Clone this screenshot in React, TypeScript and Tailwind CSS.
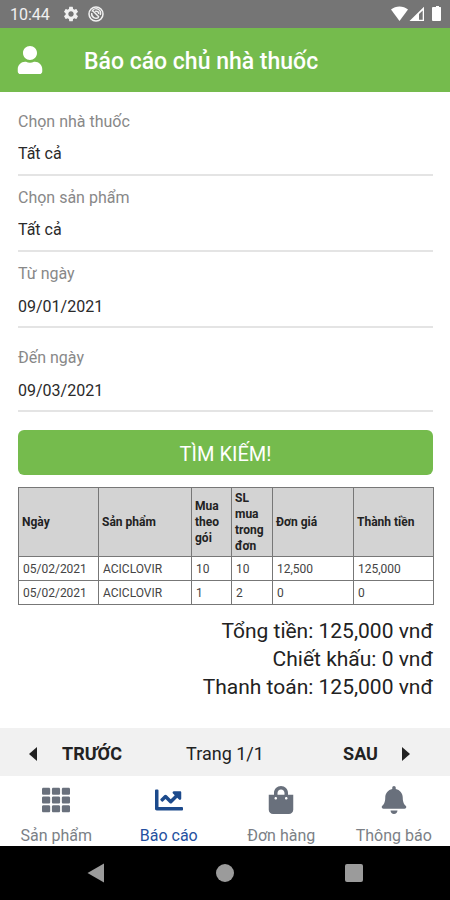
import { FC, ReactNode, useState } from "react";
import { FaBell, FaChartLine, FaShoppingBag, FaTh, FaUser } from "react-icons/fa";
import { MdSettings } from "react-icons/md";
import clsx from "clsx";

type ReportRow = {
  date: string;
  product: string;
  packs: number;
  quantity: number;
  price: string;
  total: string;
};

const ROWS: ReportRow[] = [
  { date: "05/02/2021", product: "ACICLOVIR", packs: 10, quantity: 10, price: "12,500", total: "125,000" },
  { date: "05/02/2021", product: "ACICLOVIR", packs: 1, quantity: 2, price: "0", total: "0" },
];

// fixed table layout stretches these to the full width
const COLUMNS = [
  { title: "Ngày", width: "w-[80px]" },
  { title: "Sản phẩm", width: "w-[93px]" },
  { title: "Mua theo gói", width: "w-[40px]" },
  { title: "SL mua trong đơn", width: "w-[41px]" },
  { title: "Đơn giá", width: "w-[81px]" },
  { title: "Thành tiền", width: "w-[80px]" },
];

const TOTALS = ["Tổng tiền: 125,000 vnđ", "Chiết khấu: 0 vnđ", "Thanh toán: 125,000 vnđ"];

const TABS = [
  { label: "Sản phẩm", href: "#products", icon: FaTh },
  { label: "Báo cáo", href: "#reports", icon: FaChartLine, active: true },
  { label: "Đơn hàng", href: "#orders", icon: FaShoppingBag },
  { label: "Thông báo", href: "#notifications", icon: FaBell },
];

const CONTROL = "block h-10 w-full appearance-none bg-transparent p-0 text-base text-[#2a2a2a] outline-none";

const App: FC = () => {
  const [from, setFrom] = useState("09/01/2021");
  const [to, setTo] = useState("09/03/2021");

  return (
    <div className="flex min-h-screen flex-col bg-white font-[Roboto,sans-serif] text-[#222]">
      <StatusBar />
      <header className="flex h-16 items-center bg-[#75bb4d] px-4 text-white">
        <button aria-label="Tài khoản" className="w-7">
          <FaUser className="mx-auto size-7" />
        </button>
        <h1 className="ml-10 pt-1 text-[23px] font-medium">Báo cáo chủ nhà thuốc</h1>
      </header>

      <main className="flex-1 pt-2 pr-[17px] pl-[18px]">
        <form onSubmit={(e) => e.preventDefault()}>
          <Field id="pharmacy" label="Chọn nhà thuốc">
            <select id="pharmacy" className={CONTROL}>
              <option>Tất cả</option>
            </select>
          </Field>
          <Field id="product" label="Chọn sản phẩm">
            <select id="product" className={CONTROL}>
              <option>Tất cả</option>
            </select>
          </Field>
          <Field id="from" label="Từ ngày">
            <input id="from" className={CONTROL} value={from} onChange={(e) => setFrom(e.target.value)} />
          </Field>
          <div className="pt-2">
            <Field id="to" label="Đến ngày">
              <input id="to" className={CONTROL} value={to} onChange={(e) => setTo(e.target.value)} />
            </Field>
          </div>
          <button type="submit" className="mt-[18px] h-[45px] w-full rounded-md bg-[#75bb4d] pt-0.5 text-xl text-white">
            TÌM KIẾM!
          </button>
        </form>

        <table className="mt-3 w-full table-fixed border-collapse text-left text-xs">
          <thead>
            <tr className="h-[69px] bg-[#d3d3d3]">
              {COLUMNS.map((column) => (
                <th
                  key={column.title}
                  className={clsx("border border-[#777] px-[3px] leading-4 font-bold", column.width)}
                >
                  {column.title}
                </th>
              ))}
            </tr>
          </thead>
          <tbody className="text-[#444]">
            {ROWS.map((row, i) => (
              <tr key={i} className="h-6">
                {Object.values(row).map((value, j) => (
                  <td key={j} className="border border-[#777] px-1">
                    {value}
                  </td>
                ))}
              </tr>
            ))}
          </tbody>
        </table>

        <div className="mt-3 pb-6 text-right text-[21px] leading-7">
          {TOTALS.map((line) => (
            <p key={line}>{line}</p>
          ))}
        </div>
      </main>

      <div className="grid h-12 grid-cols-[1fr_auto_1fr] items-center bg-[#f1f1f1] px-7 pt-1 text-lg">
        <button className="flex items-center gap-6 justify-self-start font-bold">
          <svg viewBox="0 0 8 14" className="h-3.5 w-2.5" fill="currentColor">
            <path d="M8 0v14L0 7z" />
          </svg>
          TRƯỚC
        </button>
        <span>Trang 1/1</span>
        <button className="flex items-center gap-6 justify-self-end pr-3 font-bold">
          SAU
          <svg viewBox="0 0 8 14" className="h-3.5 w-2" fill="currentColor">
            <path d="M0 0v14l8-7z" />
          </svg>
        </button>
      </div>

      <nav className="grid h-[70px] grid-cols-4 pt-2.5">
        {TABS.map(({ label, href, icon: Icon, active }) => (
          <a
            key={label}
            href={href}
            className={clsx(
              "flex flex-col items-center gap-3",
              active ? "text-[#2450a0]" : "text-[#7b7f86]"
            )}
          >
            <Icon className={clsx("size-7", active ? "text-[#1c4a8c]" : "text-[#69707c]")} />
            <span className="leading-5">{label}</span>
          </a>
        ))}
      </nav>

      <SystemNav />
    </div>
  );
};

const Field: FC<{ id: string; label: string; children: ReactNode }> = ({ id, label, children }) => (
  <div className="border-b-2 border-[#e4e4e4] pt-2.5">
    <label htmlFor={id} className="block leading-6 text-[#888]">
      {label}
    </label>
    {children}
  </div>
);

const StatusBar: FC = () => (
  <div className="flex h-7 items-center bg-[#757575] pr-2 pl-2.5 text-base text-white/90">
    <span className="pt-0.5">10:44</span>
    <MdSettings className="ml-3 size-[18px]" />
    <svg viewBox="0 0 16 16" className="ml-2 size-4" fill="none" stroke="currentColor" strokeWidth="1.5">
      <circle cx="8" cy="8" r="7" />
      <path d="M4 5.5A4.5 4.5 0 0 1 12.3 9M3.8 7a4.3 4.3 0 0 0 7 4.2M5 5l6 6M7 5.4c2-.8 4 .6 3.7 2.6" />
    </svg>
    <svg viewBox="0 0 52 16" className="ml-auto h-4 w-[52px]" fill="white">
      <path d="M1 3.600C5.800-.4 13.200-.4 18 3.600L9.500 15z" />
      <path fillRule="evenodd" d="M34 .8V15H19.500zM32.700 4.500V13.700H29V8z" />
      <path d="M44 1h2V0h3v1h1.500q.500 0 .500 1v12q0 1-1 1h-7q-1 0-1-1V2q0-1 1-1z" />
    </svg>
  </div>
);

const SystemNav: FC = () => (
  <div className="grid h-[54px] grid-cols-[1fr_auto_1fr] items-center bg-black text-[#9b9b9b]">
    <button aria-label="Back" className="justify-self-center pr-6">
      <svg viewBox="0 0 18 20" className="h-5 w-[18px]" fill="currentColor">
        <path d="M17 .5v19L.5 10z" />
      </svg>
    </button>
    <button aria-label="Home" className="size-[18px] rounded-full bg-current" />
    <button aria-label="Recents" className="justify-self-center pl-6">
      <span className="block size-[18px] rounded-xs bg-current" />
    </button>
  </div>
);

export default App;
